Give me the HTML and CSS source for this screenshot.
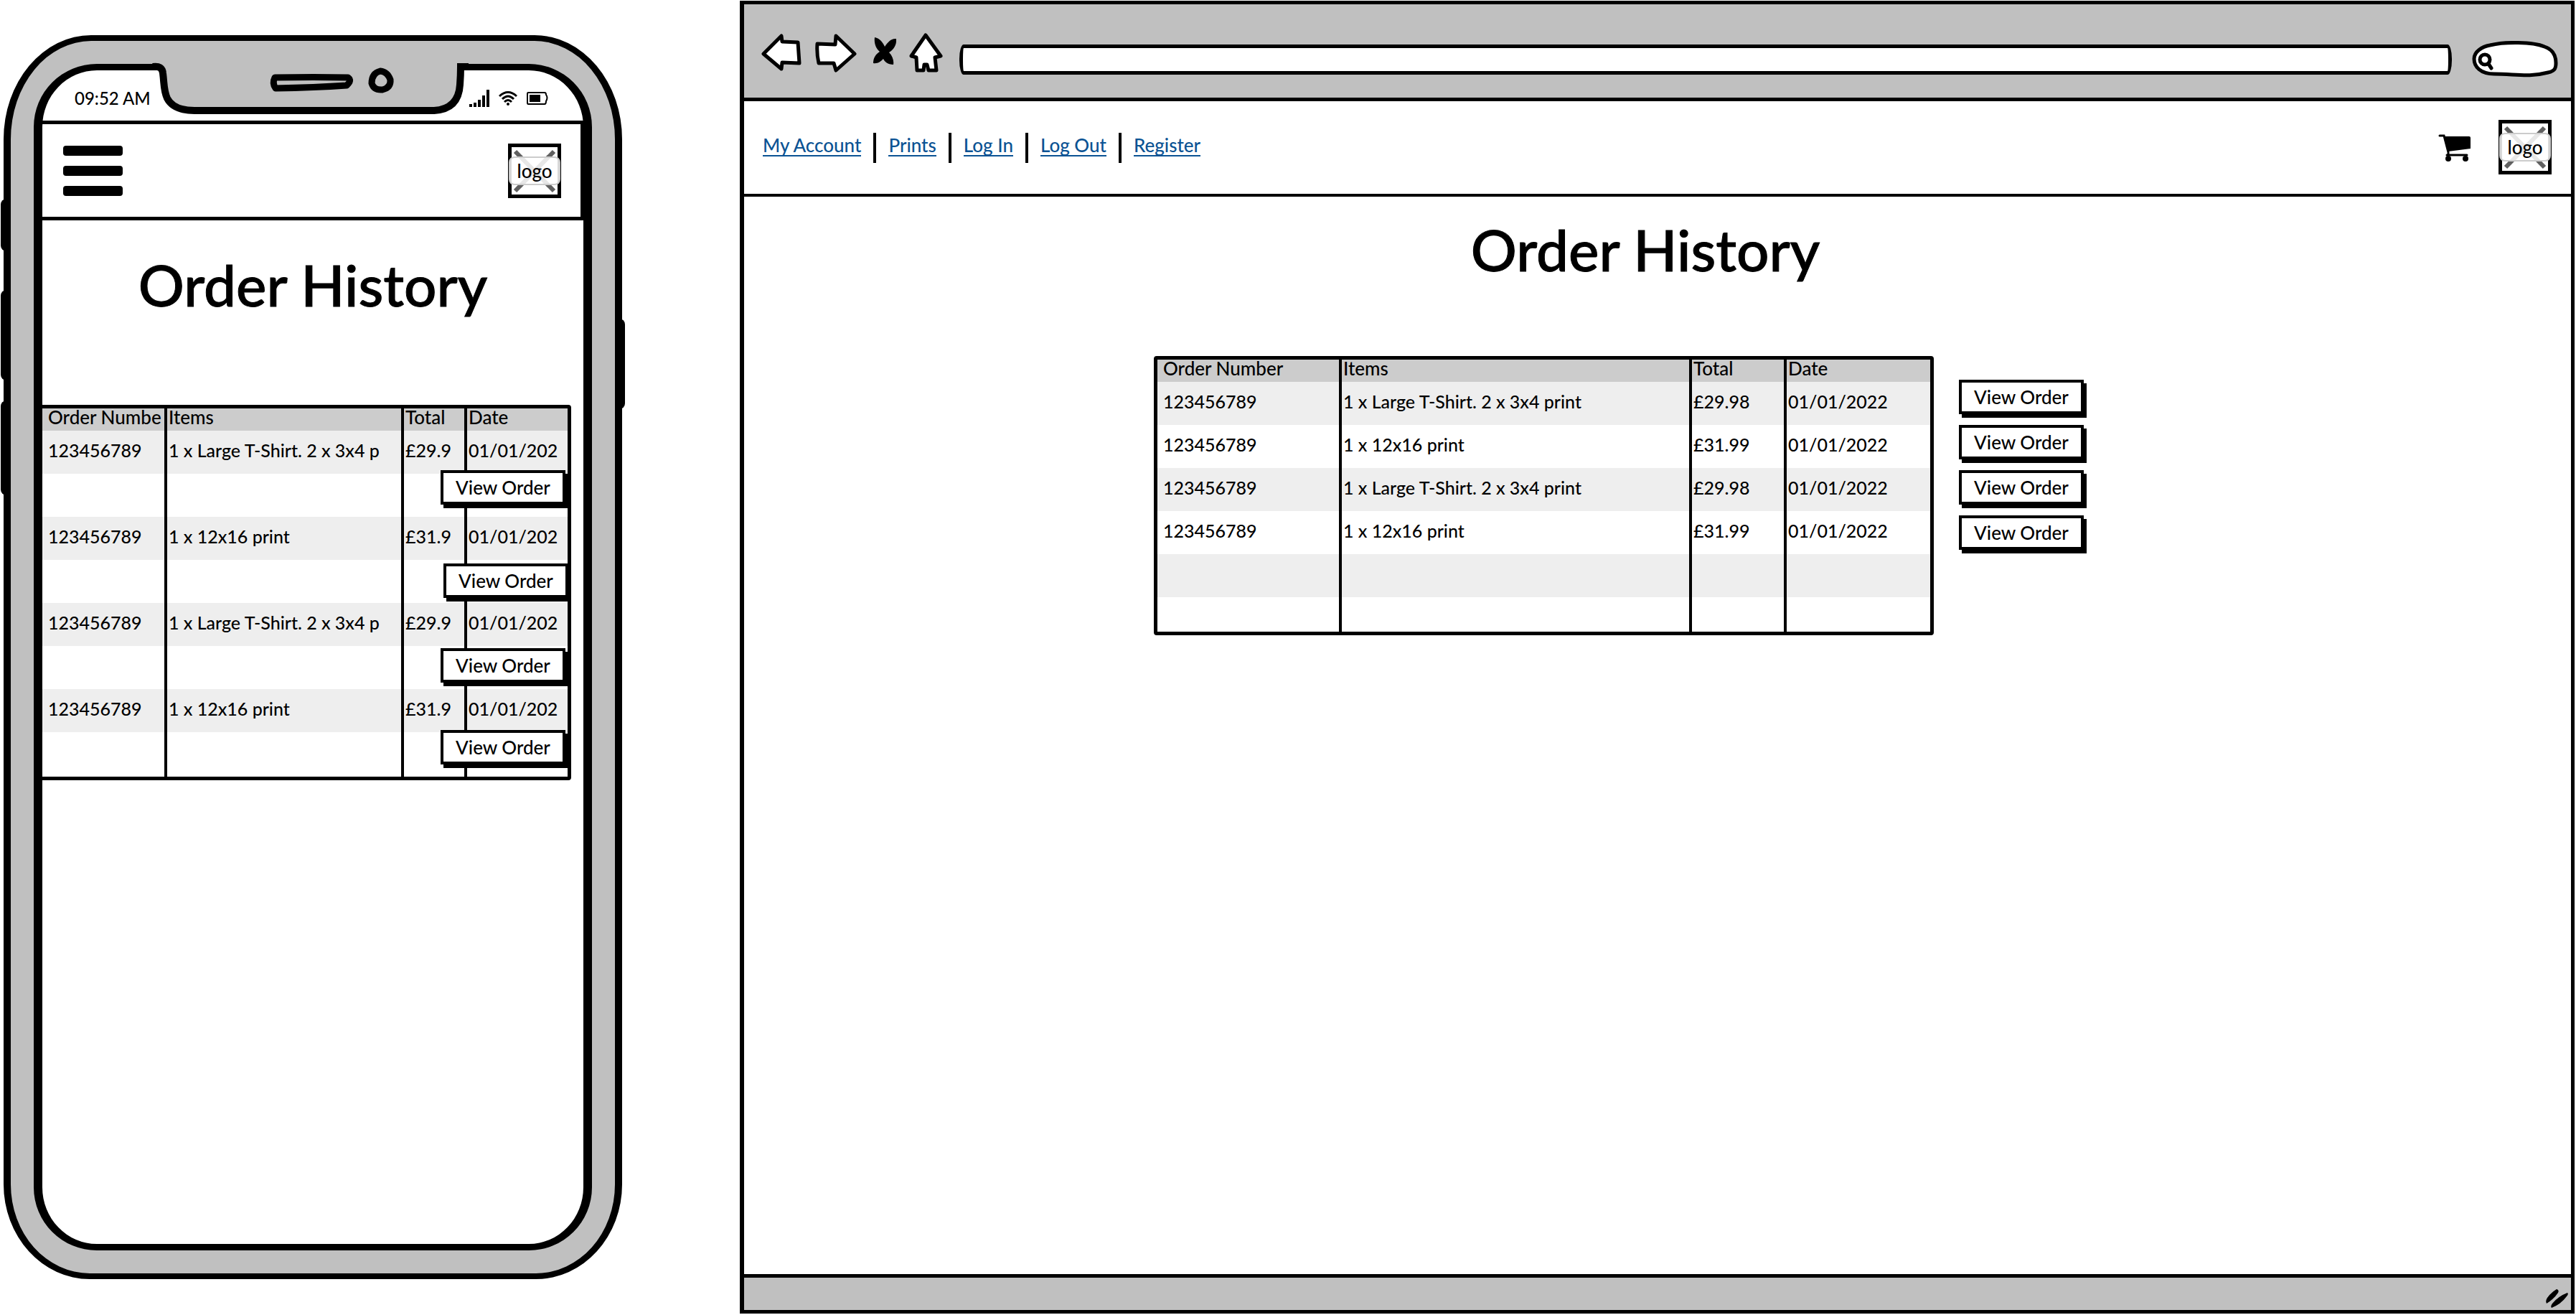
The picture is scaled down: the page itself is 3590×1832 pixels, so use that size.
FILE: index.html
```html
<!DOCTYPE html>
<html lang="en">
<head>
<meta charset="utf-8">
<title>Order History</title>
<link rel="stylesheet" href="styles.css">
</head>
<body>
<section class="phone" aria-label="Mobile layout">
  <span class="side-key key-mute"></span>
  <span class="side-key key-up"></span>
  <span class="side-key key-down"></span>
  <span class="side-key key-power"></span>
  <div class="screen">
    <div class="status">
      <span class="time">09:52 AM</span>
      <span class="status-icons">
        <svg width="28" height="24" viewBox="0 0 28 24"><path d="M0 20h4v4H0zM6 18h4v6H6zM12 14h4v10h-4zM18 8h4v16h-4zM24 0h4v24h-4z"/></svg>
        <svg width="28" height="22" viewBox="0 0 28 22"><g fill="none" stroke="#000" stroke-width="3"><path d="M2 8Q14-3 26 8"/><path d="M6 12Q14 4 22 12"/><path d="M9 16Q14 11 19 16"/></g><circle cx="14" cy="19" r="2"/></svg>
        <svg width="30" height="18" viewBox="0 0 30 18"><path d="M2 1h23q2 0 2 3q3 4 0 9q0 4-2 4H2q-1 0-1-2V3q0-2 1-2z" fill="#fff" stroke="#000" stroke-width="2"/><path d="M4 4h15v10H4z"/></svg>
      </span>
    </div>
    <header class="phone-header">
      <button class="menu" aria-label="Menu"><span></span><span></span><span></span></button>
      <div class="logo">
        <svg viewBox="0 0 64 66"><path d="M5 6l54 55M59 6L5 61"/></svg>
        <span>logo</span>
      </div>
    </header>
    <h1 class="title">Order History</h1>
    <div class="phone-orders">
      <table class="orders narrow">
        <colgroup><col class="p-number"><col class="p-items"><col class="p-total"><col></colgroup>
        <thead><tr><th>Order Numbe</th><th>Items</th><th>Total</th><th>Date</th></tr></thead>
        <tbody>
          <tr><td>123456789</td><td>1 x Large T-Shirt. 2 x 3x4 p</td><td>£29.9</td><td>01/01/202</td></tr>
          <tr><td></td><td></td><td></td><td></td></tr>
          <tr><td>123456789</td><td>1 x 12x16 print</td><td>£31.9</td><td>01/01/202</td></tr>
          <tr><td></td><td></td><td></td><td></td></tr>
          <tr><td>123456789</td><td>1 x Large T-Shirt. 2 x 3x4 p</td><td>£29.9</td><td>01/01/202</td></tr>
          <tr><td></td><td></td><td></td><td></td></tr>
          <tr><td>123456789</td><td>1 x 12x16 print</td><td>£31.9</td><td>01/01/202</td></tr>
          <tr><td></td><td></td><td></td><td></td></tr>
        </tbody>
      </table>
      <button class="view over over-1">View Order</button>
      <button class="view over over-2">View Order</button>
      <button class="view over over-3">View Order</button>
      <button class="view over over-4">View Order</button>
    </div>
  </div>
  <svg class="notch" width="470" height="80" viewBox="200 84 470 80">
    <path d="M221 84V93Q227 93 228 102C230 118 229 126 234 137Q243 154 272 154H606Q640 152 641 118Q642 104 643 93V84Z" fill="#c0c0c0"/>
    <path d="M214 93Q227 91 228 102C230 118 229 126 234 137Q243 154 272 154H606Q640 152 642 118Q643 104 643 93H654" fill="none" stroke="#000" stroke-width="10"/>
    <path d="M384 108Q380 116 385 123Q440 122 484 119Q492 112 486 108Q440 107 384 108Z" fill="#c0c0c0" stroke="#000" stroke-width="9" stroke-linejoin="round"/>
    <path d="M531 99Q519 102 519 116Q522 126 534 125Q546 122 545 111Q541 100 531 99Z" fill="#c0c0c0" stroke="#000" stroke-width="9"/>
  </svg>
</section>

<section class="browser" aria-label="Desktop layout">
  <div class="toolbar">
    <button class="tool" aria-label="Back"><svg width="56" height="56" viewBox="0 0 56 56"><path class="ink" d="M3 30L28 5L29 13L51 14L53 43L29 42L28 51Z"/></svg></button>
    <button class="tool" aria-label="Forward"><svg width="60" height="56" viewBox="0 0 60 56"><path class="ink" d="M4 16L29 17L30 5L56 30L30 53L27 43L6 43Q3 30 4 16Z"/></svg></button>
    <button class="tool" aria-label="Stop"><svg width="36" height="56" viewBox="0 0 36 56"><path d="M6 7C13 8 18 15 20 20C24 14 29 8 36 9C37 19 31 25 26 28C31 33 33 40 32 45C24 45 20 41 18 37C14 41 10 44 4 43C4 35 8 30 13 27C7 22 5 14 6 7Z"/></svg></button>
    <button class="tool" aria-label="Home"><svg width="48" height="56" viewBox="0 0 48 56"><path class="ink" d="M23 4L44 33L36 35L38 53H27L25 45H21L20 53H11L10 35L3 33Z"/></svg></button>
    <input class="url" type="text" aria-label="Address">
    <label class="search">
      <svg width="120" height="52" viewBox="0 0 120 52"><path class="ink" d="M3 25C3 15 14 8 25 6C45 1 85 1 101 8C113 12 117 20 117 31C117 40 114 42 106 44C80 51 60 46 31 46C12 46 3 36 3 25Z"/><circle class="ink" cx="18" cy="26" r="7"/><path class="ink" d="M23 32l4 6"/></svg>
      <input type="search" aria-label="Search">
    </label>
  </div>
  <nav class="site-nav">
    <ul>
      <li><a href="#">My Account</a></li>
      <li><a href="#">Prints</a></li>
      <li><a href="#">Log In</a></li>
      <li><a href="#">Log Out</a></li>
      <li><a href="#">Register</a></li>
    </ul>
    <div class="nav-right">
      <svg width="46" height="40" viewBox="0 0 46 40"><path d="M8 4H43Q45 4 45 6V21L14 25Z"/><path d="M2 3H8L14 26V30M12 30H40" fill="none" stroke="#000" stroke-width="3" stroke-linecap="round"/><circle cx="14" cy="35" r="4"/><circle cx="38" cy="35" r="4"/></svg>
      <div class="logo">
        <svg viewBox="0 0 64 66"><path d="M5 6l54 55M59 6L5 61"/></svg>
        <span>logo</span>
      </div>
    </div>
  </nav>
  <main class="page">
    <h1 class="title">Order History</h1>
    <div class="order-area">
      <table class="orders wide">
        <colgroup><col class="w-number"><col class="w-items"><col class="w-total"><col></colgroup>
        <thead><tr><th>Order Number</th><th>Items</th><th>Total</th><th>Date</th></tr></thead>
        <tbody>
          <tr><td>123456789</td><td>1 x Large T-Shirt. 2 x 3x4 print</td><td>£29.98</td><td>01/01/2022</td></tr>
          <tr><td>123456789</td><td>1 x 12x16 print</td><td>£31.99</td><td>01/01/2022</td></tr>
          <tr><td>123456789</td><td>1 x Large T-Shirt. 2 x 3x4 print</td><td>£29.98</td><td>01/01/2022</td></tr>
          <tr><td>123456789</td><td>1 x 12x16 print</td><td>£31.99</td><td>01/01/2022</td></tr>
          <tr><td></td><td></td><td></td><td></td></tr>
          <tr><td></td><td></td><td></td><td></td></tr>
        </tbody>
      </table>
      <div class="actions">
        <button class="view">View Order</button>
        <button class="view">View Order</button>
        <button class="view">View Order</button>
        <button class="view">View Order</button>
      </div>
    </div>
  </main>
  <footer class="statusbar">
    <svg width="36" height="30" viewBox="0 0 36 30"><path d="M18 2Q22 3 20 7Q15 15 4 22Q2 18 5 14Q10 7 18 2ZM33 7Q35 9 32 12Q24 23 11 28Q9 26 12 22Q20 12 33 7Z"/></svg>
  </footer>
</section>
</body>
</html>
```
FILE: styles.css
```css
* { box-sizing: border-box; }

body {
  margin: 0;
  min-height: 100vh;
  display: flex;
  justify-content: space-between;
  background: #fff;
  color: #000;
  font: 500 25px/24px Lato, "Open Sans", sans-serif;
}

button, input { font: inherit; color: inherit; }

/* Phone frame */
.phone {
  position: relative;
  flex: none;
  display: flex;
  width: 862px;
  margin: 49px 0 50px 5px;
  padding: 32px;
  border: solid #000;
  border-width: 8px 10px;
  border-radius: 122px 122px 120px 120px / 145px 145px 132px 132px;
  background: #c0c0c0;
}

.screen {
  flex: 1;
  min-width: 0;
  border: solid #000;
  border-width: 9px 12px;
  border-radius: 88px;
  background: #fff;
}

.notch { position: absolute; left: 184px; top: 27px; }

.side-key { position: absolute; left: -14px; width: 8px; background: #000; border-radius: 8px 0 0 8px; }
.key-mute { top: 220px; height: 73px; }
.key-up { top: 347px; height: 126px; }
.key-down { top: 501px; height: 132px; }
.key-power { left: auto; right: -14px; top: 387px; height: 126px; border-radius: 0 8px 8px 0; }

.status {
  display: flex;
  justify-content: space-between;
  align-items: flex-start;
  height: 70px;
  padding: 27px 49px 0 45px;
}

.time { font-size: 24px; }
.status-icons { display: flex; align-items: center; gap: 12px; }

.phone-header {
  display: flex;
  justify-content: space-between;
  align-items: center;
  height: 139px;
  padding: 0 27px 0 29px;
  border: solid #000;
  border-width: 5px 4px 5px 0;
}

.menu {
  display: flex;
  flex-direction: column;
  gap: 14px;
  width: 83px;
  padding: 0;
  border: 0;
  background: none;
}

.menu span { display: block; height: 14px; border-radius: 4px; background: #000; }

.logo {
  position: relative;
  display: flex;
  align-items: center;
  width: 74px;
  height: 76px;
  border: 5px solid #000;
}

.logo svg { position: absolute; inset: 0; width: 64px; height: 66px; fill: none; stroke: #606060; stroke-width: 6; }

.logo span {
  position: relative;
  flex: 1;
  margin: 0 -4px;
  border: 2px solid #ccc;
  border-radius: 8px;
  background: rgba(255, 255, 255, .85);
  font-size: 26px;
  line-height: 36px;
  text-align: center;
}

.title {
  margin: 41px 0 120px;
  font-size: 80px;
  line-height: 96px;
  font-weight: 500;
  text-align: center;
  -webkit-text-stroke: 1px;
}

/* Order tables */
.orders {
  table-layout: fixed;
  width: 100%;
  border: 5px solid #000;
  border-radius: 4px;
  border-spacing: 0;
}

.orders th, .orders td {
  padding: 0 0 0 2px;
  border-right: 4px solid #000;
  text-align: left;
  vertical-align: top;
  white-space: nowrap;
}

.orders th { height: 31px; background: #ccc; font-size: 26px; font-weight: 500; }
.orders td { height: 60px; padding-top: 15px; }
.orders th:first-child, .orders td:first-child { padding-left: 8px; }
.orders th:last-child, .orders td:last-child { border-right: 0; }
.orders tbody tr:nth-child(odd) { background: #eee; }

.narrow tbody tr:last-child td { height: 62px; }
.p-number { width: 174px; }
.p-items { width: 330px; }
.p-total { width: 88px; }

.wide { width: 1087px; }
.wide tbody tr:last-child td { height: 48px; }
.w-number { width: 257px; }
.w-items { width: 488px; }
.w-total { width: 132px; }

.view {
  width: 174px;
  height: 48px;
  padding: 0;
  border: 4px solid #000;
  background: #fff;
  box-shadow: 4px 5px #000;
  font-size: 26px;
  line-height: 32px;
}

.phone-orders { position: relative; margin: 0 17px 0 -5px; }
.over { position: absolute; right: 8px; }
.over-1 { top: 91px; }
.over-2 { top: 221px; right: 4px; }
.over-3 { top: 339px; }
.over-4 { top: 453px; }

/* Browser window */
.browser {
  flex: 1;
  display: flex;
  flex-direction: column;
  margin: 1px 2px 2px 164px;
  border: solid #000;
  border-width: 5px 5px 5px 6px;
}

.toolbar {
  display: flex;
  align-items: flex-start;
  gap: 18px;
  height: 135px;
  padding: 39px 18px 0 24px;
  border-bottom: 5px solid #000;
  background: #c0c0c0;
}

.tool { padding: 0; border: 0; background: none; }
.tool svg { display: block; }
.ink { fill: #fff; stroke: #000; stroke-width: 5; stroke-linejoin: round; stroke-linecap: round; }

.url {
  flex: 1;
  min-width: 0;
  height: 42px;
  margin: 17px 10px 0 4px;
  padding: 0 12px;
  border: 5px solid #000;
  border-radius: 6px / 20px;
  background: #fff;
}

.search { position: relative; width: 120px; height: 52px; margin-top: 12px; }
.search svg { display: block; }
.search input {
  position: absolute;
  inset: 8px 8px 8px 32px;
  width: 76px;
  padding: 0;
  border: 0;
  background: none;
  appearance: none;
}

.site-nav {
  display: flex;
  justify-content: space-between;
  align-items: center;
  height: 133px;
  padding: 0 27px 0 26px;
  border-bottom: 4px solid #000;
}

.site-nav ul { display: flex; margin: 0; padding: 0; list-style: none; }
.site-nav li { display: flex; height: 42px; align-items: flex-start; padding-top: 3px; }
.site-nav li + li { margin-left: 17px; padding-left: 17px; border-left: 4px solid #000; }

.site-nav a {
  border-bottom: 2px solid #0b5394;
  color: #0b5394;
  font-size: 26px;
  line-height: 28px;
  text-decoration: none;
}

.nav-right { display: flex; align-items: center; gap: 38px; }
.nav-right .logo { margin-bottom: 2px; }

.page { flex: 1; }
.page .title { margin: 25px 34px 101px 0; }
.order-area { display: flex; justify-content: center; align-items: flex-start; gap: 35px; padding-right: 104px; }
.actions { display: flex; flex-direction: column; gap: 15px; padding: 33px 4px 0 0; }

.statusbar {
  display: flex;
  justify-content: flex-end;
  height: 50px;
  padding: 14px 2px 0;
  border-top: 5px solid #000;
  background: #c0c0c0;
}
```
